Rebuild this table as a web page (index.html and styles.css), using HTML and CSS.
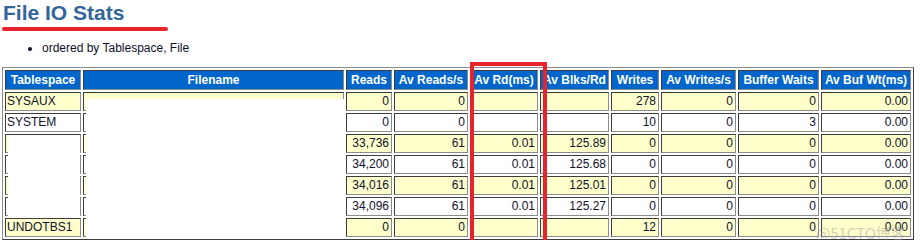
FILE: index.html
```html
<!DOCTYPE html>
<html>
<head>
<meta charset="utf-8">
<title>File IO Stats</title>
<link rel="stylesheet" href="styles.css">
</head>
<body>
<div class="page">
  <h2 class="awr">File IO Stats</h2>
  <ul class="notes"><li>ordered by Tablespace, File</li></ul>
  <table class="stats">
    <tr>
      <th class="c-ts">Tablespace</th>
      <th class="c-fn">Filename</th>
      <th class="c-rd">Reads</th>
      <th class="c-ars">Av Reads/s</th>
      <th class="c-arm">Av Rd(ms)</th>
      <th class="c-abr">Av Blks/Rd</th>
      <th class="c-wr">Writes</th>
      <th class="c-aws">Av Writes/s</th>
      <th class="c-bw">Buffer Waits</th>
      <th class="c-abw">Av Buf Wt(ms)</th>
    </tr>
    <tr class="y"><td class="ts">SYSAUX</td><td></td><td>0</td><td>0</td><td></td><td></td><td>278</td><td>0</td><td>0</td><td>0.00</td></tr>
    <tr class="w"><td class="ts">SYSTEM</td><td></td><td>0</td><td>0</td><td></td><td></td><td>10</td><td>0</td><td>3</td><td>0.00</td></tr>
    <tr class="y"><td class="ts"></td><td></td><td>33,736</td><td>61</td><td>0.01</td><td>125.89</td><td>0</td><td>0</td><td>0</td><td>0.00</td></tr>
    <tr class="w"><td class="ts"></td><td></td><td>34,200</td><td>61</td><td>0.01</td><td>125.68</td><td>0</td><td>0</td><td>0</td><td>0.00</td></tr>
    <tr class="y"><td class="ts"></td><td></td><td>34,016</td><td>61</td><td>0.01</td><td>125.01</td><td>0</td><td>0</td><td>0</td><td>0.00</td></tr>
    <tr class="w"><td class="ts"></td><td></td><td>34,096</td><td>61</td><td>0.01</td><td>125.27</td><td>0</td><td>0</td><td>0</td><td>0.00</td></tr>
    <tr class="y"><td class="ts">UNDOTBS1</td><td></td><td>0</td><td>0</td><td></td><td></td><td>12</td><td>0</td><td>0</td><td>0.00</td></tr>
  </table>
  <div class="redact redact-file"></div>
  <div class="redact redact-ts"></div>
  <div class="mark-underline"></div>
  <div class="mark-box"></div>
  <div class="watermark">@51CTO博客</div>
</div>
</body>
</html>
```
FILE: styles.css
```css
body {
  margin: 0;
  background: #ffffff;
  font-family: "Liberation Sans", Arial, Helvetica, sans-serif;
}

.page {
  position: relative;
  padding: 0 2px;
}

h2.awr {
  font: bold 21px/24px "Liberation Sans", Arial, Helvetica, sans-serif;
  color: #336699;
  margin: 1px 0 0 1px;
}

.notes {
  margin: 16px 0 12px;
  padding-left: 40px;
  font-size: 12px;
  line-height: 14px;
  color: #10102a;
}

table.stats {
  border-collapse: separate;
  border-spacing: 2px;
  border: 1px solid;
  border-color: #8c8c8c #3c3c3c #3c3c3c #8c8c8c;
  table-layout: fixed;
  width: 912px;
}

table.stats th,
table.stats td {
  box-sizing: border-box;
  border: 1px solid;
  border-color: #3c3c3c #8c8c8c #8c8c8c #3c3c3c;
  white-space: nowrap;
  overflow: hidden;
}

table.stats th {
  height: 20px;
  padding: 2px 2px;
  background: #0066cc;
  color: #ffffff;
  font: bold 12px/14px "Liberation Sans", Arial, Helvetica, sans-serif;
  text-align: center;
}

table.stats td {
  height: 19px;
  padding: 1px 2px 2px;
  font: 12px/14px "Liberation Sans", Arial, Helvetica, sans-serif;
  color: #10102a;
  text-align: right;
}

table.stats td.ts {
  text-align: left;
  padding-left: 1px;
}

tr.y td { background: #ffffcc; }
tr.w td { background: #ffffff; }

.c-ts  { width: 76px; }
.c-fn  { width: 261px; }
.c-rd  { width: 46px; }
.c-ars { width: 74px; }
.c-arm { width: 68px; }
.c-abr { width: 69px; }
.c-wr  { width: 48px; }
.c-aws { width: 75px; }
.c-bw  { width: 81px; }
.c-abw { width: 90px; }

/* redaction boxes laid over the table */
.redact {
  position: absolute;
  background: #ffffff;
}
.redact-file {
  left: 86px;
  top: 98px;
  width: 258px;
  height: 138px;
}
.redact-ts {
  left: 8px;
  top: 134px;
  width: 72px;
  height: 81px;
}

/* red annotations */
.mark-underline {
  position: absolute;
  left: 2px;
  top: 26px;
  width: 166px;
  height: 4px;
  border-radius: 2px;
  background: #e8232b;
}
.mark-box {
  position: absolute;
  left: 470px;
  top: 61px;
  width: 77px;
  height: 182px;
  box-sizing: border-box;
  border: 4px solid #e8232b;
}

.watermark {
  position: absolute;
  left: 816px;
  top: 222px;
  font: 15px/20px "Noto Sans CJK SC", "Noto Sans", sans-serif;
  color: rgba(150, 150, 150, 0.45);
  white-space: nowrap;
}
```
